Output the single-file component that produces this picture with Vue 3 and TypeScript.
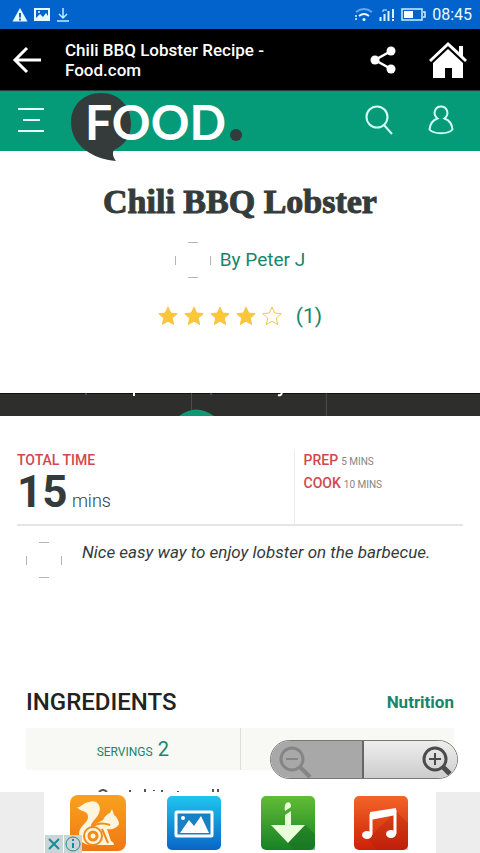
<script setup lang="ts">
const filledStars = 4
const totalStars = 5
const starPath = 'M10 1l2.700 6 6.500.7-4.900 4.400 1.400 6.400L10 15.200l-5.700 3.300 1.400-6.400L.8 7.700 7.300 7z'
</script>

<template>
  <div class="screen">
    <div class="status">
      <svg width="16" height="16" viewBox="0 0 16 16"><path d="M8 1l7.500 13.500H.5z" fill="#e6fbff" /><path d="M8 6v4.500M8 11.500v2" stroke="#14549c" stroke-width="1.800" /></svg>
      <svg width="16" height="16" viewBox="0 0 16 16"><path fill="#e6fbff" fill-rule="evenodd" d="M0 1h16v13H0zM2 3v8l4-4 3 3 3-4 2 3V3z" /><circle cx="5" cy="5" r="1" fill="#e6fbff" /></svg>
      <svg width="14" height="16" viewBox="0 0 14 16" fill="none" stroke="#bdefff" stroke-width="1.500"><path d="M7 1v10M3 7l4 4 4-4M1 14h12" /></svg>
      <span class="grow"></span>
      <svg width="18" height="16" viewBox="0 0 18 16" fill="none" stroke-width="1.800"><path d="M1 5q8-6 16 0" stroke="#62aaf0" /><path d="M4 9q5-4 10 0" stroke="#e6fbff" /><circle cx="9" cy="12.500" r="1.500" fill="#e6fbff" /><path d="M1 8v2M1 11v2" stroke="#a9dfff" /></svg>
      <svg width="16" height="16" viewBox="0 0 16 16" stroke="#d6f6ff" stroke-width="2"><path d="M1.500 10v4M5.500 7v7M9.500 4v10M14 2v9M14 12v2" /><path d="M4 5V3h4" fill="none" stroke-width="1" /></svg>
      <svg width="25" height="16" viewBox="0 0 25 16"><path d="M1 2h20v11H1zM22 5h2v5h-2" fill="none" stroke="#c9efff" stroke-width="1.500" /><path d="M3 4h9v7H3z" fill="#fff" /></svg>
      <time class="clock">08:45</time>
    </div>

    <header class="appbar">
      <button class="plain" aria-label="Back"><svg width="30" height="28" viewBox="0 0 30 28" fill="none" stroke="#fff" stroke-width="3"><path d="M29 14H3M15 2L3 14l12 12" /></svg></button>
      <p class="page-name">Chili BBQ Lobster Recipe - Food.com</p>
      <button class="plain share" aria-label="Share"><svg width="26" height="28" viewBox="0 0 26 28" fill="#fff"><path d="M21 5L5 14l16 9" fill="none" stroke="#fff" stroke-width="2.500" /><circle cx="21" cy="5" r="4.500" /><circle cx="5" cy="14" r="4.500" /><circle cx="21" cy="23" r="4.500" /></svg></button>
      <button class="plain" aria-label="Home"><svg width="40" height="38" viewBox="0 0 40 38" fill="#fff"><path d="M20 1l11 10V5h4v10l4 4-2 2L20 5 3 21l-2-2z" /><path d="M20 8l15 14v15H24V27h-7v10H5V22z" /></svg></button>
    </header>

    <nav class="site">
      <button class="plain" aria-label="Menu"><svg width="28" height="28" viewBox="0 0 28 28" stroke="#e4fff9" stroke-width="2"><path d="M1 3h26M6 14h17M1 25h26" /></svg></button>
      <a class="logo" href="#">
        <svg width="174" height="70" viewBox="0 0 174 70">
          <path d="M31 1C13 1 1 14 1 30c0 24 22 37 45 39-3-4-4-8-2-11 11-5 17-14 17-26C61 14 49 1 31 1z" fill="#343b3b" />
          <text class="wordmark" x="15" y="48" fill="#fff">FOOD</text>
          <circle cx="166" cy="43" r="6" fill="#343b3b" />
        </svg>
      </a>
      <span class="grow"></span>
      <button class="plain search" aria-label="Search"><svg width="28" height="30" viewBox="0 0 28 30" fill="none" stroke="#d4fff4" stroke-width="2"><circle cx="12" cy="12" r="10.500" /><path d="M19 20l8 9" /></svg></button>
      <button class="plain" aria-label="Account"><svg width="26" height="30" viewBox="0 0 26 30" fill="none" stroke="#d4fff4" stroke-width="2"><path d="M9.500 13.500C4 9 7 1.500 13 1.500S22 9 16.500 13.500c4.500 1.500 7.500 6 8 11-4 5-19 5-23 0 .5-5 3.500-9.500 8-11z" /></svg></button>
    </nav>

    <main>
      <section class="intro">
        <h1>Chili BBQ Lobster</h1>
        <a class="author" href="#"><svg width="36" height="36" viewBox="0 0 36 36"><path d="M13 .5h10M13 35.500h10M.5 14v9M35.500 14v9" stroke="#b5b5b5" /></svg>By Peter J</a>
        <a class="rating" href="#">
          <svg v-for="n in totalStars" :key="n" width="20" height="20" viewBox="0 0 20 20"><path :d="starPath" :fill="n <= filledStars ? '#fbc638' : '#fff'" stroke="#f4c64a" /></svg>
          <span class="count">(1)</span>
        </a>
      </section>

      <svg class="strip" height="23" aria-hidden="true">
        <rect width="100%" height="23" fill="#2e2e2d" />
        <rect width="100%" height="1" fill="#111" />
        <path d="M191.500 0v23M326.500 0v23" stroke="#4b4b4b" />
        <path d="M86 0v2M211 0v2" stroke="#2b8b76" />
        <path d="M134 0v3M282 0q-1 3-4 2" stroke="#fff" stroke-width="2" fill="none" />
        <path d="M179 23q17-13 35 0z" fill="#119873" />
      </svg>

      <section class="times">
        <div class="total"><span class="label">TOTAL TIME</span><p class="amount"><strong>15</strong> mins</p></div>
        <div class="parts"><p><b>PREP</b> <span>5 MINS</span></p><p><b>COOK</b> <span>10 MINS</span></p></div>
      </section>

      <section class="note">
        <svg width="36" height="36" viewBox="0 0 36 36"><path d="M13 .5h10M13 35.500h10M.5 14v9M35.500 14v9" stroke="#b5b5b5" /></svg>
        <p>Nice easy way to enjoy lobster on the barbecue.</p>
      </section>

      <section class="ingredients">
        <div class="heading"><h2>INGREDIENTS</h2><a href="#">Nutrition</a></div>
        <div class="servings"><button class="plain serving">SERVINGS <span>2</span></button><div class="unit"></div></div>
        <svg class="peek" width="126" height="3" viewBox="0 0 126 3" aria-hidden="true" stroke="#555" fill="none" stroke-width="2"><path d="M2 3q4-4 8 0M33 1v2M48 0v3M57 1v1M65 1v2M81 2v1M116 0v3M121 0v3" /></svg>
      </section>

      <div class="zoom">
        <button class="out" aria-label="Zoom out"><svg width="36" height="32" viewBox="0 0 36 32" fill="none" stroke="#858585"><circle cx="13" cy="13" r="11" stroke-width="3" /><path d="M7 13h12" stroke-width="2" /><path d="M21 21l10 10" stroke-width="4" /></svg></button>
        <button class="in" aria-label="Zoom in"><svg width="32" height="32" viewBox="0 0 32 32" fill="none" stroke="#4b4b4b"><circle cx="14" cy="13" r="11" stroke-width="3" /><path d="M8 13h12M14 7v12" stroke-width="2" /><path d="M22 21l7 7" stroke-width="5" /></svg></button>
      </div>
    </main>

    <aside class="ad">
      <div class="banner">
        <a href="#" aria-label="Browser"><svg width="60" height="60" viewBox="0 0 60 60">
          <defs><linearGradient id="gold" x2="0" y2="1"><stop stop-color="#f9a11d" /><stop offset="1" stop-color="#ef7813" /></linearGradient></defs>
          <rect x="1" y="2" width="56" height="56" rx="8" fill="url(#gold)" />
          <path fill="#fff4dd" d="M20 9c8-3 13 4 10 11-2 6-9 9-8 15 4-5 9-6 12-8 2-4 4-6 7-7l2-4 2 6c3 2 5 6 5 9-2 4-7 6-12 5l4 12c2 1 3 2 3 4H22c-7 0-12-4-12-11 0-9 10-11 9-18-1-6-8-4-11-9 4 1 5-4 12-5z" />
          <path d="M22 35q7-7 19-3M33 36l6 14" fill="none" stroke="#f28b19" stroke-width="2" />
          <circle cx="24" cy="43" r="9" fill="#fff4dd" stroke="#f28b19" stroke-width="2" /><circle cx="24" cy="43" r="4" fill="#fff4dd" stroke="#f28b19" stroke-width="3" />
        </svg></a>
        <a href="#" aria-label="Gallery"><svg width="56" height="58" viewBox="0 0 56 58">
          <defs><linearGradient id="sky" x2="0" y2="1"><stop stop-color="#20c5ee" /><stop offset="1" stop-color="#0965c7" /></linearGradient></defs>
          <rect x="1" y="2" width="54" height="54" rx="5" fill="url(#sky)" />
          <rect x="10" y="18" width="36" height="24" rx="1" fill="#1681c4" stroke="#fff" stroke-width="3" /><path d="M14 39l9-13 5 6 7-10 8 17z" fill="#fff" /><circle cx="17" cy="24" r="2" fill="#fff" />
        </svg></a>
        <a href="#" aria-label="Downloads"><svg width="56" height="58" viewBox="0 0 56 58">
          <defs><linearGradient id="leaf" x2="0" y2="1"><stop stop-color="#62bc35" /><stop offset="1" stop-color="#168226" /></linearGradient></defs>
          <rect x="1" y="2" width="54" height="54" rx="5" fill="url(#leaf)" /><path d="M45 31l10 9v16H34L28 49z" fill="#176d22" opacity=".5" />
          <path d="M25 31V21l6-4v14h14L28 49 11 31zM25 17c-2-11 7-11 6-4z" fill="#e9ffda" />
        </svg></a>
        <a href="#" aria-label="Music"><svg width="56" height="58" viewBox="0 0 56 58">
          <defs><linearGradient id="fire" x2="0" y2="1"><stop stop-color="#f36428" /><stop offset="1" stop-color="#cc2108" /></linearGradient></defs>
          <rect x="1" y="2" width="54" height="54" rx="5" fill="url(#fire)" /><path d="M15 45l9 11h31V29L43 17z" fill="#9f1708" opacity=".25" />
          <path d="M18 41V20M42 16v24" fill="none" stroke="#fff" stroke-width="3" /><path d="M17 18l26-4v7l-26 5z" fill="#fff" /><ellipse cx="14" cy="41" rx="5" ry="4" fill="#fff" /><ellipse cx="38" cy="40" rx="5" ry="4" fill="#fff" />
        </svg></a>
        <div class="choices">
          <button aria-label="Close ad"><svg width="18" height="18" viewBox="0 0 18 18" stroke="#168b9b" stroke-width="2"><path d="M4 4l10 10M14 4L4 14" /></svg></button>
          <button aria-label="Ad information"><svg width="18" height="18" viewBox="0 0 18 18" fill="none" stroke="#168b9b" stroke-width="2"><circle cx="9" cy="9" r="7" stroke-width="1" /><path d="M9 8v5M9 4v2" /></svg></button>
        </div>
      </div>
    </aside>
  </div>
</template>

<style>
body { margin: 0; }
</style>

<style scoped>
* { box-sizing: border-box; }
.screen { min-height: 100vh; display: flex; flex-direction: column; background: #fff; color: #343b3b; font-family: "Roboto", "Liberation Sans", sans-serif; }
h1, h2, p { margin: 0; }
a { color: #18856c; text-decoration: none; }
svg { display: block; flex: none; }
.grow { flex: 1; }
.plain { display: flex; padding: 0; border: 0; background: none; color: inherit; font: inherit; }
.status { height: 29px; display: flex; align-items: center; gap: 6px; padding: 0 8px 0 12px; background: #0263cd; color: #e6fbff; }
.clock { font-size: 16px; line-height: 20px; }
.appbar { height: 62px; display: flex; align-items: center; padding: 0 12px; background: #000; color: #fff; border-bottom: 1px solid #263c37; }
.page-name { flex: 1; margin-left: 23px; padding-right: 72px; font-size: 17px; line-height: 20px; font-weight: 500; }
.share { margin-right: 32px; }
.site { height: 60px; display: flex; align-items: center; padding: 0 26px 3px 17px; background: #069b78; }
.logo { align-self: flex-start; height: 57px; margin-left: 25px; padding-top: 1px; z-index: 1; }
.wordmark { font-family: "Lato", sans-serif; font-size: 48px; font-weight: 700; }
.search { margin-right: 35px; }
main { flex: 1; position: relative; display: flex; flex-direction: column; }
.intro { height: 242px; display: flex; flex-direction: column; align-items: center; padding-top: 29px; }
h1 { font-family: "Liberation Serif", serif; font-size: 34px; line-height: 44px; font-weight: 700; -webkit-text-stroke: 1px #343b3b; }
.author { display: flex; align-items: center; gap: 9px; margin-top: 18px; font-size: 19px; line-height: 36px; }
.rating { display: flex; align-items: center; gap: 6px; margin-top: 24px; }
.count { margin-left: 8px; font-size: 21px; line-height: 28px; }
.strip { width: 100%; }
.times { display: flex; margin: 34px 17px 0; height: 76px; border-bottom: 2px solid #e5e5e5; }
.total { flex: 1; }
.label { display: block; color: #d0484e; font-size: 14px; line-height: 20px; font-weight: 500; }
.amount { font-size: 18px; line-height: 44px; font-weight: 300; }
.amount strong { font-size: 44px; font-weight: 700; }
.parts { width: 38%; padding-left: 9px; border-left: 1px solid #ececec; color: #858585; font-size: 10px; line-height: 20px; }
.parts p { display: flex; align-items: baseline; gap: 3px; height: 23px; }
.parts b { color: #d0484e; font-size: 14px; font-weight: 500; }
.note { display: flex; gap: 20px; margin: 16px 26px 0; }
.note p { font-size: 17px; line-height: 20px; font-style: italic; }
.ingredients { margin: 108px 26px 0; }
.heading { display: flex; align-items: center; justify-content: space-between; height: 32px; }
h2 { font-size: 24px; line-height: 32px; font-weight: 500; color: #222; }
.heading a { font-size: 17px; font-weight: 700; }
.servings { display: flex; height: 42px; margin-top: 10px; background: #f8f8f5; }
.serving { flex: 1; justify-content: center; align-items: baseline; gap: 5px; color: #18856c; font-size: 12px; line-height: 42px; }
.serving span { font-size: 20px; }
.unit { flex: 1; border-left: 1px solid #ddd; }
.peek { margin: 19px 0 0 71px; }
.zoom { position: absolute; right: 22px; bottom: 13px; width: 188px; height: 39px; display: flex; border: 1px solid #777; border-radius: 20px; overflow: hidden; }
.zoom button { width: 50%; display: flex; align-items: center; padding: 4px 8px 0; border: 0; background: linear-gradient(#eee, #ccc); }
.zoom .out { background: #a8a8a8; border-right: 2px solid #666; }
.zoom .in { justify-content: flex-end; padding-right: 4px; }
.ad { height: 61px; padding: 0 44px; background: #ededed; }
.banner { position: relative; height: 61px; display: flex; justify-content: space-between; align-items: center; padding: 0 27px 0 25px; background: #fff; }
.choices { position: absolute; left: 1px; bottom: 0; display: flex; gap: 1px; }
.choices button { padding: 0; border: 0; background: #ccd5d5; }
</style>
